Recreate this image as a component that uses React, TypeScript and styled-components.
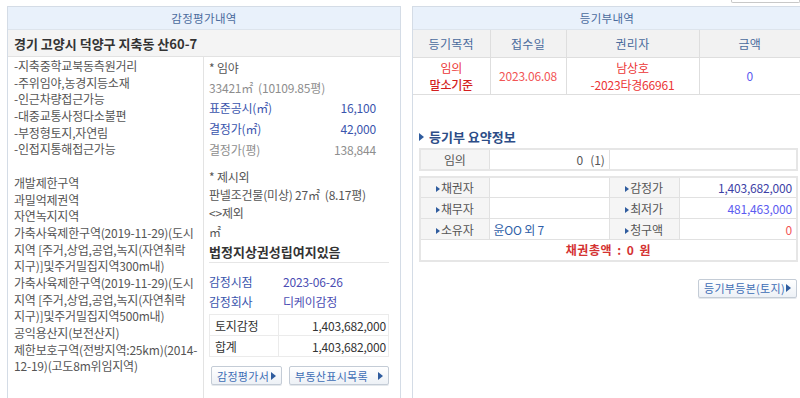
import styled, { createGlobalStyle } from "styled-components";

const GlobalStyle = createGlobalStyle`
    html, body {
        margin: 0;
        padding: 0;
        background: #fff;
    }
    body {
        font-family: "Noto Sans CJK KR", "Noto Sans", sans-serif;
        font-size: 12px;
        color: #555;
        letter-spacing: -0.2px;
    }
    * {
        box-sizing: border-box;
    }
`;

const leftLines = [
    "-지축중학교북동측원거리",
    "-주위임야,농경지등소재",
    "-인근차량접근가능",
    "-대중교통사정다소불편",
    "-부정형토지,자연림",
    "-인접지통해접근가능",
    "",
    "개발제한구역",
    "과밀억제권역",
    "자연녹지지역",
    "가축사육제한구역(2019-11-29)(도시",
    "지역 [주거,상업,공업,녹지(자연취락",
    "지구)]및주거밀집지역300m내)",
    "가축사육제한구역(2019-11-29)(도시",
    "지역 [주거,상업,공업,녹지(자연취락",
    "지구)]및주거밀집지역500m내)",
    "공익용산지(보전산지)",
    "제한보호구역(전방지역:25km)(2014-",
    "12-19)(고도8m위임지역)",
];

const App = () => {
    return (
        <>
            <GlobalStyle />
            <Page>
                <LeftPanel>
                    <PanelHeader>감정평가내역</PanelHeader>
                    <Address>경기 고양시 덕양구 지축동 산60-7</Address>
                    <Body>
                        <Remarks>
                            {leftLines.map((line, i) => (
                                <Line key={i}>{line}</Line>
                            ))}
                        </Remarks>
                        <Detail>
                            <Row $h={20}>* 임야</Row>
                            <Row $h={20} $tone="muted">
                                33421㎡ &nbsp;(10109.85평)
                            </Row>
                            <PriceRow $h={21} $tone="blue">
                                <span>표준공시(㎡)</span>
                                <span>16,100</span>
                            </PriceRow>
                            <PriceRow $h={21} $tone="blue">
                                <span>결정가(㎡)</span>
                                <span>42,000</span>
                            </PriceRow>
                            <PriceRow $h={21} $tone="muted">
                                <span>결정가(평)</span>
                                <span>138,844</span>
                            </PriceRow>
                            <Row $h={18} $mt={7}>
                                * 제시외
                            </Row>
                            <Row $h={18}>판넬조건물(미상) 27㎡ &nbsp;(8.17평)</Row>
                            <Row $h={18}>&lt;&gt;제외</Row>
                            <Row $h={20}>㎡</Row>
                            <Notice>법정지상권성립여지있음</Notice>
                            <Divider />
                            <DateRow $mt={8}>
                                <span>감정시점</span>
                                <span>2023-06-26</span>
                            </DateRow>
                            <DateRow>
                                <span>감정회사</span>
                                <span>디케이감정</span>
                            </DateRow>
                            <AmountTable>
                                <tbody>
                                    <tr>
                                        <td>토지감정</td>
                                        <td>1,403,682,000</td>
                                    </tr>
                                    <tr>
                                        <td>합계</td>
                                        <td>1,403,682,000</td>
                                    </tr>
                                </tbody>
                            </AmountTable>
                            <Buttons>
                                <ActionButton $w={71}>
                                    감정평가서 <Arrow />
                                </ActionButton>
                                <ActionButton $w={100}>
                                    부동산표시목록 <Arrow />
                                </ActionButton>
                            </Buttons>
                        </Detail>
                    </Body>
                </LeftPanel>

                <RightColumn>
                    <Stub />
                    <RightPanel>
                        <PanelHeader>등기부내역</PanelHeader>
                        <RegistryTable>
                            <colgroup>
                                <col style={{ width: 77 }} />
                                <col style={{ width: 76 }} />
                                <col style={{ width: 133 }} />
                                <col />
                            </colgroup>
                            <thead>
                                <tr>
                                    <th>등기목적</th>
                                    <th>접수일</th>
                                    <th>권리자</th>
                                    <th>금액</th>
                                </tr>
                            </thead>
                            <tbody>
                                <tr>
                                    <Cell $tone="red">
                                        임의
                                        <br />
                                        <Strong>말소기준</Strong>
                                    </Cell>
                                    <Cell $tone="pink">2023.06.08</Cell>
                                    <Cell $tone="red">
                                        남상호
                                        <br />
                                        -2023타경66961
                                    </Cell>
                                    <Cell $tone="violet">0</Cell>
                                </tr>
                            </tbody>
                        </RegistryTable>

                        <Summary>
                            <SummaryTitle>
                                <Arrow />
                                등기부 요약정보
                            </SummaryTitle>
                            <SummaryTable>
                                <colgroup>
                                    <col style={{ width: 69 }} />
                                    <col style={{ width: 120 }} />
                                    <col />
                                </colgroup>
                                <tbody>
                                    <tr>
                                        <LabelCell>임의</LabelCell>
                                        <ValueCell $align="right">
                                            0 &nbsp;&nbsp;(1)
                                        </ValueCell>
                                        <ValueCell />
                                    </tr>
                                </tbody>
                            </SummaryTable>
                            <SummaryTable $mt={5}>
                                <colgroup>
                                    <col style={{ width: 69 }} />
                                    <col style={{ width: 120 }} />
                                    <col style={{ width: 70 }} />
                                    <col />
                                </colgroup>
                                <tbody>
                                    <tr>
                                        <LabelCell>
                                            <Arrow $small />
                                            채권자
                                        </LabelCell>
                                        <ValueCell />
                                        <LabelCell>
                                            <Arrow $small />
                                            감정가
                                        </LabelCell>
                                        <ValueCell $align="right" $tone="navy">
                                            1,403,682,000
                                        </ValueCell>
                                    </tr>
                                    <tr>
                                        <LabelCell>
                                            <Arrow $small />
                                            채무자
                                        </LabelCell>
                                        <ValueCell />
                                        <LabelCell>
                                            <Arrow $small />
                                            최저가
                                        </LabelCell>
                                        <ValueCell $align="right" $tone="violet">
                                            481,463,000
                                        </ValueCell>
                                    </tr>
                                    <tr>
                                        <LabelCell>
                                            <Arrow $small />
                                            소유자
                                        </LabelCell>
                                        <ValueCell $tone="blue">윤OO 외 7</ValueCell>
                                        <LabelCell>
                                            <Arrow $small />
                                            청구액
                                        </LabelCell>
                                        <ValueCell $align="right" $tone="pink">
                                            0
                                        </ValueCell>
                                    </tr>
                                    <tr>
                                        <TotalCell colSpan={4}>채권총액 : 0 원</TotalCell>
                                    </tr>
                                </tbody>
                            </SummaryTable>
                            <CopyRow>
                                <ActionButton $w={99}>
                                    등기부등본(토지) <Arrow />
                                </ActionButton>
                            </CopyRow>
                        </Summary>
                    </RightPanel>
                </RightColumn>
            </Page>
        </>
    );
};

export default App;

type Tone = "muted" | "blue" | "red" | "pink" | "violet" | "navy";

const toneColor = (tone?: Tone) => {
    switch (tone) {
        case "muted":
            return "#8e8e8e";
        case "blue":
            return "#3a55ad";
        case "red":
            return "#ec3535";
        case "pink":
            return "#f25555";
        case "violet":
            return "#5b5bf0";
        case "navy":
            return "#3d3fa6";
        default:
            return "#555";
    }
};

const Page = styled.div`
    display: flex;
    align-items: flex-start;
    gap: 11px;
    width: 800px;
    height: 398px;
    padding-left: 7px;
    overflow: hidden;
`;

const LeftPanel = styled.section`
    flex-shrink: 0;
    width: 394px;
    height: 400px;
    margin-top: 6px;
    border: 1px solid #d4dce6;
    border-bottom: none;
`;

const PanelHeader = styled.div`
    height: 23px;
    display: flex;
    align-items: center;
    justify-content: center;
    background: #e9f1fb;
    border-bottom: 1px solid #dde4ec;
    color: #4a6b9d;
    font-size: 11.5px;
    letter-spacing: 0.3px;
`;

const Address = styled.div`
    height: 27px;
    display: flex;
    align-items: center;
    padding-left: 6px;
    background: #f4f4f4;
    border-bottom: 1px solid #e2e2e2;
    color: #333;
    font-size: 13px;
    font-weight: 600;
    letter-spacing: 0;
`;

const Body = styled.div`
    display: grid;
    grid-template-columns: 196px 1fr;
    height: 100%;
`;

const Remarks = styled.div`
    padding: 1px 0 0 6px;
    border-right: 1px solid #e3e3e3;
    overflow: hidden;
`;

const Line = styled.div`
    height: 16.7px;
    line-height: 16.7px;
    white-space: nowrap;
    color: #555;
`;

const Detail = styled.div`
    padding: 0 12px 0 5px;
`;

const Row = styled.div<{ $h?: number; $mt?: number; $tone?: Tone }>`
    height: ${(p) => p.$h ?? 20}px;
    margin-top: ${(p) => p.$mt ?? 0}px;
    display: flex;
    align-items: center;
    white-space: nowrap;
    color: ${(p) => toneColor(p.$tone)};
`;

const PriceRow = styled(Row)`
    justify-content: space-between;
    padding-right: 13px;
`;

const Notice = styled.div`
    height: 21px;
    display: flex;
    align-items: center;
    color: #333;
    font-size: 13px;
    font-weight: 700;
    letter-spacing: 0;
`;

const Divider = styled.hr`
    margin: 0;
    border: none;
    border-top: 1px solid #e6e6e6;
`;

const DateRow = styled.div<{ $mt?: number }>`
    display: grid;
    grid-template-columns: 74px 1fr;
    align-items: center;
    height: 20px;
    margin-top: ${(p) => p.$mt ?? 0}px;
    color: #3a55ad;

    span:last-child {
        color: #4b4db3;
    }
`;

const AmountTable = styled.table`
    width: 100%;
    margin-top: 3px;
    border-collapse: collapse;
    border: 1px solid #e3e3e3;

    td {
        height: 21px;
        padding: 0 5px;
        border: 1px solid #ebebeb;
        color: #333;
        white-space: nowrap;
    }
    td:first-child {
        width: 69px;
    }
    td:last-child {
        text-align: right;
        padding-right: 2px;
    }
`;

const Buttons = styled.div`
    display: flex;
    gap: 7px;
    margin-top: 9px;
    padding-left: 2px;
`;

const ActionButton = styled.button<{ $w: number }>`
    width: ${(p) => p.$w}px;
    height: 19px;
    display: flex;
    align-items: center;
    justify-content: space-between;
    padding: 0 5px 0 5px;
    border: 1px solid #c4ccd6;
    border-radius: 2px;
    background: linear-gradient(#ffffff, #edf1f6);
    box-shadow: 0 1px 0 #e4e8ec;
    color: #3d6db5;
    font-family: inherit;
    font-size: 11px;
    letter-spacing: 0.3px;
    white-space: nowrap;
    cursor: pointer;
`;

const Arrow = styled.span<{ $small?: boolean }>`
    display: inline-block;
    flex-shrink: 0;
    width: 0;
    height: 0;
    margin-right: ${(p) => (p.$small ? 1 : 0)}px;
    border-left: ${(p) => (p.$small ? 4 : 5)}px solid #2f5c9e;
    border-top: ${(p) => (p.$small ? 3 : 4)}px solid transparent;
    border-bottom: ${(p) => (p.$small ? 3 : 4)}px solid transparent;
    vertical-align: middle;
`;

const RightColumn = styled.div`
    display: flex;
    flex-direction: column;
    flex-shrink: 0;
    width: 390px;
`;

const Stub = styled.div`
    align-self: flex-end;
    width: 69px;
    height: 3px;
    margin-right: 2px;
    border: 1px solid #c8c8c8;
    border-top: none;
    border-radius: 0 0 2px 2px;
`;

const RightPanel = styled.section`
    height: 400px;
    margin-top: 3px;
    border: 1px solid #d4dce6;
    border-bottom: none;
`;

const RegistryTable = styled.table`
    width: 100%;
    table-layout: fixed;
    border-collapse: collapse;

    th {
        height: 27px;
        background: #f2f2f2;
        border: 1px solid #dedede;
        border-top: none;
        color: #4a6b9d;
        font-weight: 400;
        letter-spacing: 0.3px;
    }
    th:first-child,
    td:first-child {
        border-left: none;
    }
    td {
        height: 34px;
        border: 1px solid #dedede;
        text-align: center;
        line-height: 17px;
    }
`;

const Cell = styled.td<{ $tone?: Tone }>`
    color: ${(p) => toneColor(p.$tone)};
    white-space: nowrap;
`;

const Strong = styled.span`
    color: #d41f1f;
    font-weight: 500;
`;

const Summary = styled.div`
    padding: 33px 3px 0 6px;
`;

const SummaryTitle = styled.h3`
    display: flex;
    align-items: center;
    gap: 5px;
    height: 18px;
    margin: 0;
    color: #2c4d87;
    font-size: 13px;
    font-weight: 700;
    letter-spacing: 0;
`;

const SummaryTable = styled.table<{ $mt?: number }>`
    width: 100%;
    margin-top: ${(p) => p.$mt ?? 2}px;
    table-layout: fixed;
    border-collapse: collapse;
    border: 2px solid #e6e6e6;

    td {
        height: 21px;
        border: 1px solid #e1e1e1;
        padding: 0 4px;
        white-space: nowrap;
    }
`;

const LabelCell = styled.td`
    background: #f5f5f5;
    text-align: center;
    color: #555;
`;

const ValueCell = styled.td<{ $align?: "left" | "right"; $tone?: Tone }>`
    text-align: ${(p) => p.$align ?? "left"};
    color: ${(p) => (p.$tone === "blue" ? "#2f5fa8" : toneColor(p.$tone))};
`;

const TotalCell = styled.td`
    text-align: center;
    color: #d43232;
    font-weight: 700;
    letter-spacing: 0.5px;
    word-spacing: 2px;
`;

const CopyRow = styled.div`
    display: flex;
    justify-content: flex-end;
    margin-top: 17px;
    padding-right: 1px;
`;
